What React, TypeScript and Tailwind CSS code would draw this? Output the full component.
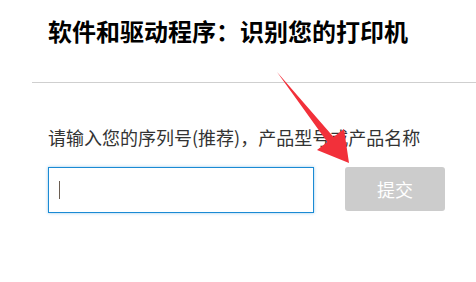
import React from "react";

export default function App() {
  return (
    <div
      className="relative w-[476px] h-[282px] overflow-hidden bg-white"
      style={{ fontFamily: '"Microsoft YaHei", "Noto Sans CJK SC", "Noto Sans", sans-serif' }}
    >
      <div className="pl-[48px] pt-[15px] text-[24px] leading-[32px] font-bold text-black">
        软件和驱动程序：识别您的打印机
      </div>
      <div className="ml-[32px] mt-[35px] border-t border-[#cfcfcf]" />
      <div className="pl-[48px] pt-[42px]">
        <div className="text-[18px] leading-[24px] text-[#333]">
          请输入您的序列号(推荐)，产品型号或产品名称
        </div>
        <div className="mt-[18px] flex items-start gap-[31px]">
          <div className="w-[266px] h-[46px] border border-[#1a8ad4] shadow-[0_0_3px_rgba(26,138,212,0.45)] flex items-center pl-[10px]">
            <span className="w-px h-[18px] bg-[#6b5e52]" />
          </div>
          <button className="w-[100px] h-[44px] rounded-[3px] bg-[#cccccc] text-white text-[18px] leading-[24px]">
            提交
          </button>
        </div>
      </div>
      <svg
        className="absolute left-0 top-0 pointer-events-none"
        width="476"
        height="282"
        viewBox="0 0 476 282"
      >
        <polygon
          points="277,72 333.5,137 344,129 349,163 317,150 327.3,141.9"
          fill="#f2303a"
        />
      </svg>
    </div>
  );
}
